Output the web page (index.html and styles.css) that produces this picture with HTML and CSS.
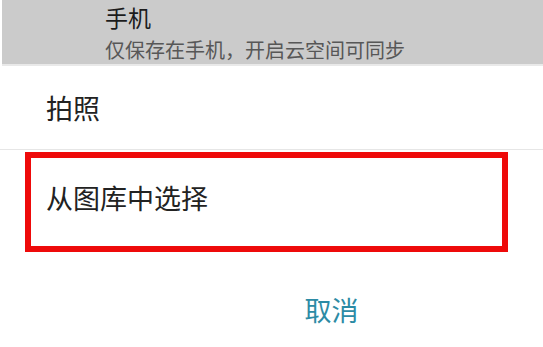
FILE: index.html
```html
<!DOCTYPE html>
<html lang="zh-CN">
<head>
    <meta charset="UTF-8">
    <meta name="viewport" content="width=device-width, initial-scale=1.0">
    <title>选择图片</title>
    <link rel="stylesheet" href="styles.css">
</head>
<body>
    <!-- 存储位置 -->
    <div class="storage">
        <div class="storage-title">手机</div>
        <div class="storage-desc">仅保存在手机，开启云空间可同步</div>
    </div>

    <!-- 选项列表 -->
    <div class="option option-camera">拍照</div>
    <div class="option option-gallery">
        从图库中选择
        <span class="highlight"></span>
    </div>

    <div class="cancel">取消</div>
</body>
</html>
```

FILE: styles.css
```css
body {
    margin: 0;
    background-color: #fff;
    font-family: "Noto Sans CJK SC", "Noto Sans", sans-serif;
    width: 543px;
    height: 347px;
    overflow: hidden;
}
.storage {
    margin-left: 2px;
    height: 66px;
    box-sizing: border-box;
    padding-left: 103px;
    background-color: #cbcbcb;
    border-bottom: 2px solid #e9e9e9;
}
.storage-title {
    font-size: 23px;
    line-height: normal;
    color: #1c1c1c;
}
.storage-desc {
    margin-top: 1px;
    font-size: 20px;
    line-height: normal;
    color: #575757;
}
.option {
    display: flex;
    align-items: center;
    padding-left: 46px;
    font-size: 27px;
    color: #222;
}
.option-camera {
    height: 83px;
    border-bottom: 1px solid #e6e6e6;
}
.option-gallery {
    position: relative;
    height: 94px;
}
.highlight {
    position: absolute;
    left: 25px;
    top: 2px;
    width: 483px;
    height: 100px;
    box-sizing: border-box;
    border: 6px solid #ee0a0a;
}
.cancel {
    padding-top: 48px;
    padding-left: 120px;
    line-height: 36px;
    text-align: center;
    font-size: 27px;
    color: #2c8ba5;
}
```
